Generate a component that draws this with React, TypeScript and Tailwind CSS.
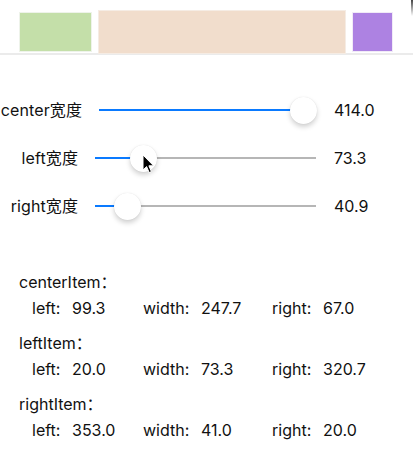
import React from 'react';

const font = { fontFamily: 'Inter, "Noto Sans CJK SC", sans-serif' };

type SliderRow = {
  label: string;
  labelW: string;
  sliderW: number;
  thumb: number;
  value: string;
};

const sliders: SliderRow[] = [
  { label: 'center宽度', labelW: 'w-[82px]', sliderW: 217, thumb: 204, value: '414.0' },
  { label: 'left宽度', labelW: 'w-[78px]', sliderW: 221, thumb: 48.5, value: '73.3' },
  { label: 'right宽度', labelW: 'w-[78px]', sliderW: 221, thumb: 32.5, value: '40.9' },
];

const items = [
  { name: 'centerItem', left: '99.3', width: '247.7', right: '67.0' },
  { name: 'leftItem', left: '20.0', width: '73.3', right: '320.7' },
  { name: 'rightItem', left: '353.0', width: '41.0', right: '20.0' },
];

function Slider({ width, thumb }: { width: number; thumb: number }) {
  return (
    <div className="relative h-[28px]" style={{ width }}>
      <div className="absolute left-0 right-0 top-[13px] h-[2px] bg-[#b6b6b6]" />
      <div className="absolute left-0 top-[13px] h-[2px] bg-[#0a7aff]" style={{ width: thumb }} />
      <div
        className="absolute top-[0.5px] h-[27px] w-[27px] rounded-full bg-white shadow-[0_3px_5px_rgba(0,0,0,0.18),0_0_1px_rgba(0,0,0,0.12)]"
        style={{ left: thumb - 13.5 }}
      />
    </div>
  );
}

export default function App() {
  return (
    <div className="relative w-[413px] h-[455px] overflow-hidden bg-white text-[16px] text-[#111]" style={font}>
      {/* preview boxes */}
      <div className="flex items-start gap-[6px] pl-[19px] h-[55px] border-b-2 border-[#ebebeb]">
        <div className="mt-[12px] h-[40px] w-[73.3px] bg-[#c4dfa9] border border-[#eef3ea]" />
        <div className="mt-[10px] h-[44px] w-[247.7px] bg-[#f1ddcc] border border-[#f5ece4]" />
        <div className="mt-[12px] h-[40px] w-[41.5px] bg-[#ad82e2] border border-[#f1ebf7]" />
      </div>

      {/* sliders */}
      <div className="mt-[31px] flex flex-col">
        {sliders.map((s) => (
          <div key={s.label} className="flex items-center h-[48px]">
            <div className={`${s.labelW} flex justify-end whitespace-nowrap tracking-[0.1px]`}>{s.label}</div>
            <div className="ml-[17px]">
              <Slider width={s.sliderW} thumb={s.thumb} />
            </div>
            <div className="ml-[18px]">{s.value}</div>
          </div>
        ))}
      </div>

      {/* item info */}
      <div className="mt-[42px] flex flex-col gap-[15px]">
        {items.map((it) => (
          <div key={it.name}>
            <div className="pl-[19px] leading-[20px]">{it.name}：</div>
            <div className="mt-[6px] pl-[32px] grid grid-cols-[111px_129px_1fr] leading-[20px]">
              <div className="flex">
                <span className="w-[40px]">left:</span>
                <span>{it.left}</span>
              </div>
              <div className="flex">
                <span className="w-[58px]">width:</span>
                <span>{it.width}</span>
              </div>
              <div className="flex">
                <span className="w-[51px]">right:</span>
                <span>{it.right}</span>
              </div>
            </div>
          </div>
        ))}
      </div>

      {/* mouse cursor */}
      <svg className="absolute left-[142px] top-[154px]" width="14" height="20" viewBox="0 0 14 20">
        <path d="M1 1 L1 16 L4.6 12.6 L7.2 18.6 L9.4 17.6 L6.9 11.8 L11.6 11.8 Z" fill="#000" stroke="#fff" strokeWidth="1" strokeLinejoin="round" />
      </svg>

      {/* scroll indicator */}
      <div className="absolute right-0 top-0 w-[2px] h-[16px] bg-gradient-to-b from-[#444] to-transparent" />
    </div>
  );
}
